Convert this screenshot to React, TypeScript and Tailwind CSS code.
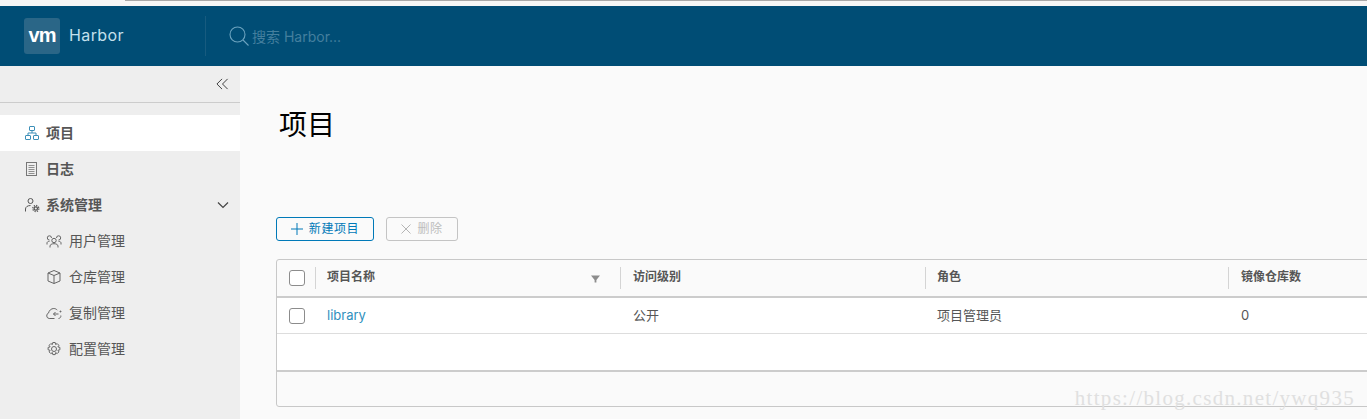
import { ReactNode } from "react";

const CJK = "font-['Inter','Noto_Sans_CJK_SC',sans-serif]";

function Checkbox() {
  return <span className="block w-4 h-4 border border-[#8c8c8c] rounded-[3px] bg-white" />;
}

function Icon({ children, className }: { children: ReactNode; className?: string }) {
  return (
    <svg
      viewBox="0 0 16 16"
      fill="none"
      stroke="currentColor"
      strokeWidth="1"
      className={"w-4 h-4 shrink-0 " + (className ?? "")}
    >
      {children}
    </svg>
  );
}

function SideItem({
  icon,
  label,
  active,
  sub,
  chevron,
}: {
  icon: ReactNode;
  label: string;
  active?: boolean;
  sub?: boolean;
  chevron?: boolean;
}) {
  return (
    <div
      className={
        "h-9 flex items-center text-[14px] " +
        (sub ? "pl-[46px] gap-[7px] text-[#565656] " : "pl-[24px] gap-[6px] font-bold text-[#565656] ") +
        (active ? "bg-white" : "")
      }
    >
      {icon}
      <span className="-translate-y-[1px]">{label}</span>
      {chevron && (
        <svg viewBox="0 0 12 8" fill="none" stroke="#444" strokeWidth="1.2" className="w-3 h-2 ml-auto mr-[11px]">
          <path d="M1 1.500 6 6.500 11 1.500" />
        </svg>
      )}
    </div>
  );
}

function HeadCell({ label, className, children }: { label: string; className: string; children?: ReactNode }) {
  return (
    <div className={"flex items-center h-[22px] border-l border-[#d4d4d4] " + className}>
      <span className="font-bold text-[12px] text-[#565656] -translate-y-[1px]">{label}</span>
      {children}
    </div>
  );
}

export default function App() {
  return (
    <div className={"relative w-[1367px] h-[419px] overflow-hidden bg-[#fafafa] flex flex-col " + CJK}>
      <div className="h-[6px] shrink-0 bg-[#f6f6f6] flex flex-col">
        <div className="h-[1px] ml-[125px] bg-[#a8a8a8]" />
      </div>
      <header className="h-[60px] shrink-0 bg-[#004d75] flex items-center pl-[24px]">
        <div className="w-9 h-9 rounded-[3px] bg-[#2a6687] flex items-center justify-center">
          <span className="font-['Liberation_Sans',sans-serif] font-bold text-white text-[20px] tracking-[-1px] leading-none -mt-[3px]">
            vm
          </span>
        </div>
        <span className="ml-[9px] w-[76px] text-[16px] text-[#c4e0ec] tracking-[0.4px] -translate-y-[1px]">Harbor</span>
        <div className="ml-[60px] h-[40px] w-px bg-[#175b7f]" />
        <svg viewBox="0 0 20 20" fill="none" stroke="#6ba3bf" strokeWidth="1.1" className="ml-[23px] w-[20px] h-[20px]">
          <circle cx="8.500" cy="8.500" r="7.500" />
          <path d="M14 14 19.500 19.500" />
        </svg>
        <span className="ml-[3px] text-[14px] text-[#447f9e]">搜索 Harbor...</span>
      </header>
      <div className="flex-1 flex min-h-0">
        <aside className="w-[240px] shrink-0 bg-[#eeeeee] flex flex-col">
          <div className="h-[37px] shrink-0 border-b border-[#cccccc] flex items-center justify-end pr-[11px]">
            <svg viewBox="0 0 14 12" fill="none" stroke="#333" className="w-[13px] h-[12px]">
              <path d="M6.500 0.500 1 6l5.500 5.500M12.500 0.500 7 6l5.500 5.500" />
            </svg>
          </div>
          <div className="mt-[12px] flex flex-col">
            <SideItem
              active
              label="项目"
              icon={
                <Icon className="text-[#3c8fb8]">
                  <rect x="5.500" y="1.500" width="5" height="4" rx="0.500" />
                  <rect x="1.500" y="10.500" width="5" height="4" rx="0.500" />
                  <rect x="9.500" y="10.500" width="5" height="4" rx="0.500" />
                  <path d="M8 5.500V8M4 10.500V8h8v2.500" />
                </Icon>
              }
            />
            <SideItem
              label="日志"
              icon={
                <Icon className="text-[#777]">
                  <rect x="2.500" y="1.500" width="10" height="13" />
                  <path d="M4.500 4.500h6M4.500 6.500h6M4.500 8.500h6M4.500 10.500h6M4.500 12.500h6" strokeWidth="0.8" />
                </Icon>
              }
            />
            <SideItem
              label="系统管理"
              chevron
              icon={
                <Icon className="text-[#565656]">
                  <circle cx="6.500" cy="4" r="2.500" />
                  <path d="M1.500 14.500V12c0-2 2-3.500 5-3.500" />
                  <circle cx="11.800" cy="11.500" r="1.700" strokeWidth="1.300" />
                  <circle cx="11.800" cy="11.500" r="3" strokeWidth="1.300" strokeDasharray="1.200 1.150" />
                </Icon>
              }
            />
            <SideItem
              sub
              label="用户管理"
              icon={
                <Icon className="text-[#666]">
                  <circle cx="8" cy="7.500" r="2.200" />
                  <path d="M4 14.500V13c0-1.200 1.500-2.300 4-2.300s4 1.100 4 2.300v1.500" />
                  <path d="M5.500 5A2.100 2.100 0 1 0 3.500 7M10.500 5A2.100 2.100 0 1 1 12.500 7" />
                  <path d="M1 11.500V10c0-1 1-1.700 2.500-1.700M15 11.500V10c0-1-1-1.700-2.500-1.700" />
                </Icon>
              }
            />
            <SideItem
              sub
              label="仓库管理"
              icon={
                <Icon className="text-[#666]">
                  <path d="M8 1.500 14 4v8l-6 2.500L2 12V4zM2 4l6 2.500L14 4M8 6.500v8" />
                </Icon>
              }
            />
            <SideItem
              sub
              label="复制管理"
              icon={
                <Icon className="text-[#666]">
                  <path d="M8.500 13.500H3.200a2.800 2.800 0 0 1-.7-5.400C3 5.500 5.200 3.500 7.800 3.500c1.400 0 2.700.6 3.500 1.700" />
                  <path d="M12.500 9H7.500M9.500 7 7.500 9l2 2" />
                  <path d="M13.500 6.500h2M14.500 5.500v2" strokeWidth="0.8" />
                  <path d="M14.800 10.500c.3 1.500-.5 2.700-2.300 3" />
                </Icon>
              }
            />
            <SideItem
              sub
              label="配置管理"
              icon={
                <Icon className="text-[#666]">
                  <circle cx="8" cy="8" r="2.500" />
                  <path
                    strokeLinejoin="round"
                    d="M6.800 1.500h2.400l.4 2 1.600-.9 1.700 1.700-1 1.600 2 .5v2.400l-2 .5 1 1.600-1.700 1.700-1.600-1-.4 2H6.800l-.4-2-1.600 1-1.700-1.700 1-1.600-2-.5V6.400l2-.5-1-1.600 1.700-1.700 1.600.9z"
                  />
                </Icon>
              }
            />
          </div>
        </aside>
        <main className="flex-1 min-w-0 pl-[36px]">
          <h1 className="mt-[39px] ml-[3px] h-[40px] text-[28px] leading-[40px] text-black">项目</h1>
          <div className="mt-[72px] flex gap-[12px]">
            <button className="w-[98px] h-[24px] flex items-center justify-center gap-[6px] border border-[#0079b8] rounded-[3px] bg-transparent text-[12px] text-[#0079b8] tracking-[0.6px]">
              <svg viewBox="0 0 12 12" stroke="#0079b8" className="w-3 h-3">
                <path d="M6 0v12M0 6h12" />
              </svg>
              新建项目
            </button>
            <button className="w-[72px] h-[24px] flex items-center justify-center gap-[6px] border border-[#c4c4c4] rounded-[3px] text-[12px] text-[#bdbdbd] tracking-[0.6px]">
              <svg viewBox="0 0 10 10" stroke="#b5b5b5" className="w-[10px] h-[10px]">
                <path d="M0.500 0.500l9 9M9.500 0.500l-9 9" />
              </svg>
              删除
            </button>
          </div>
          <div className="mt-[18px] w-[1200px] h-[148px] border border-[#c8c8c8] rounded-[3px] flex flex-col">
            <div className="h-[38px] shrink-0 border-b-2 border-[#cccccc] flex items-center">
              <div className="w-[38px] shrink-0 pl-[12px]">
                <Checkbox />
              </div>
              <HeadCell label="项目名称" className="w-[305px] relative pl-[11px]">
                <svg viewBox="0 0 10 8" className="absolute left-[275px] top-[8px] w-[9px] h-[8px]" fill="#8c8c8c">
                  <path d="M0 0h10L6 5v3H4V5z" />
                </svg>
              </HeadCell>
              <HeadCell label="访问级别" className="w-[305px] pl-[12px]" />
              <HeadCell label="角色" className="w-[303px] pl-[11px]" />
              <HeadCell label="镜像仓库数" className="flex-1 pl-[12px]" />
            </div>
            <div className="h-[36px] shrink-0 bg-white border-b border-[#dddddd] flex items-center text-[13px] text-[#565656]">
              <div className="w-[38px] shrink-0 pl-[12px]">
                <Checkbox />
              </div>
              <div className="w-[305px] pl-[12px] text-[#2f8fbd]">library</div>
              <div className="w-[305px] pl-[13px]">公开</div>
              <div className="w-[303px] pl-[12px]">项目管理员</div>
              <div className="flex-1 pl-[13px]">0</div>
            </div>
            <div className="h-[38px] shrink-0 bg-white border-b-2 border-[#cccccc]" />
          </div>
        </main>
      </div>
      <span className="absolute right-[12px] bottom-[10px] font-['Liberation_Serif',serif] text-[21px] leading-none text-[#e0e0e0] tracking-[1.3px]">
        https://blog.csdn.net/ywq935
      </span>
    </div>
  );
}
